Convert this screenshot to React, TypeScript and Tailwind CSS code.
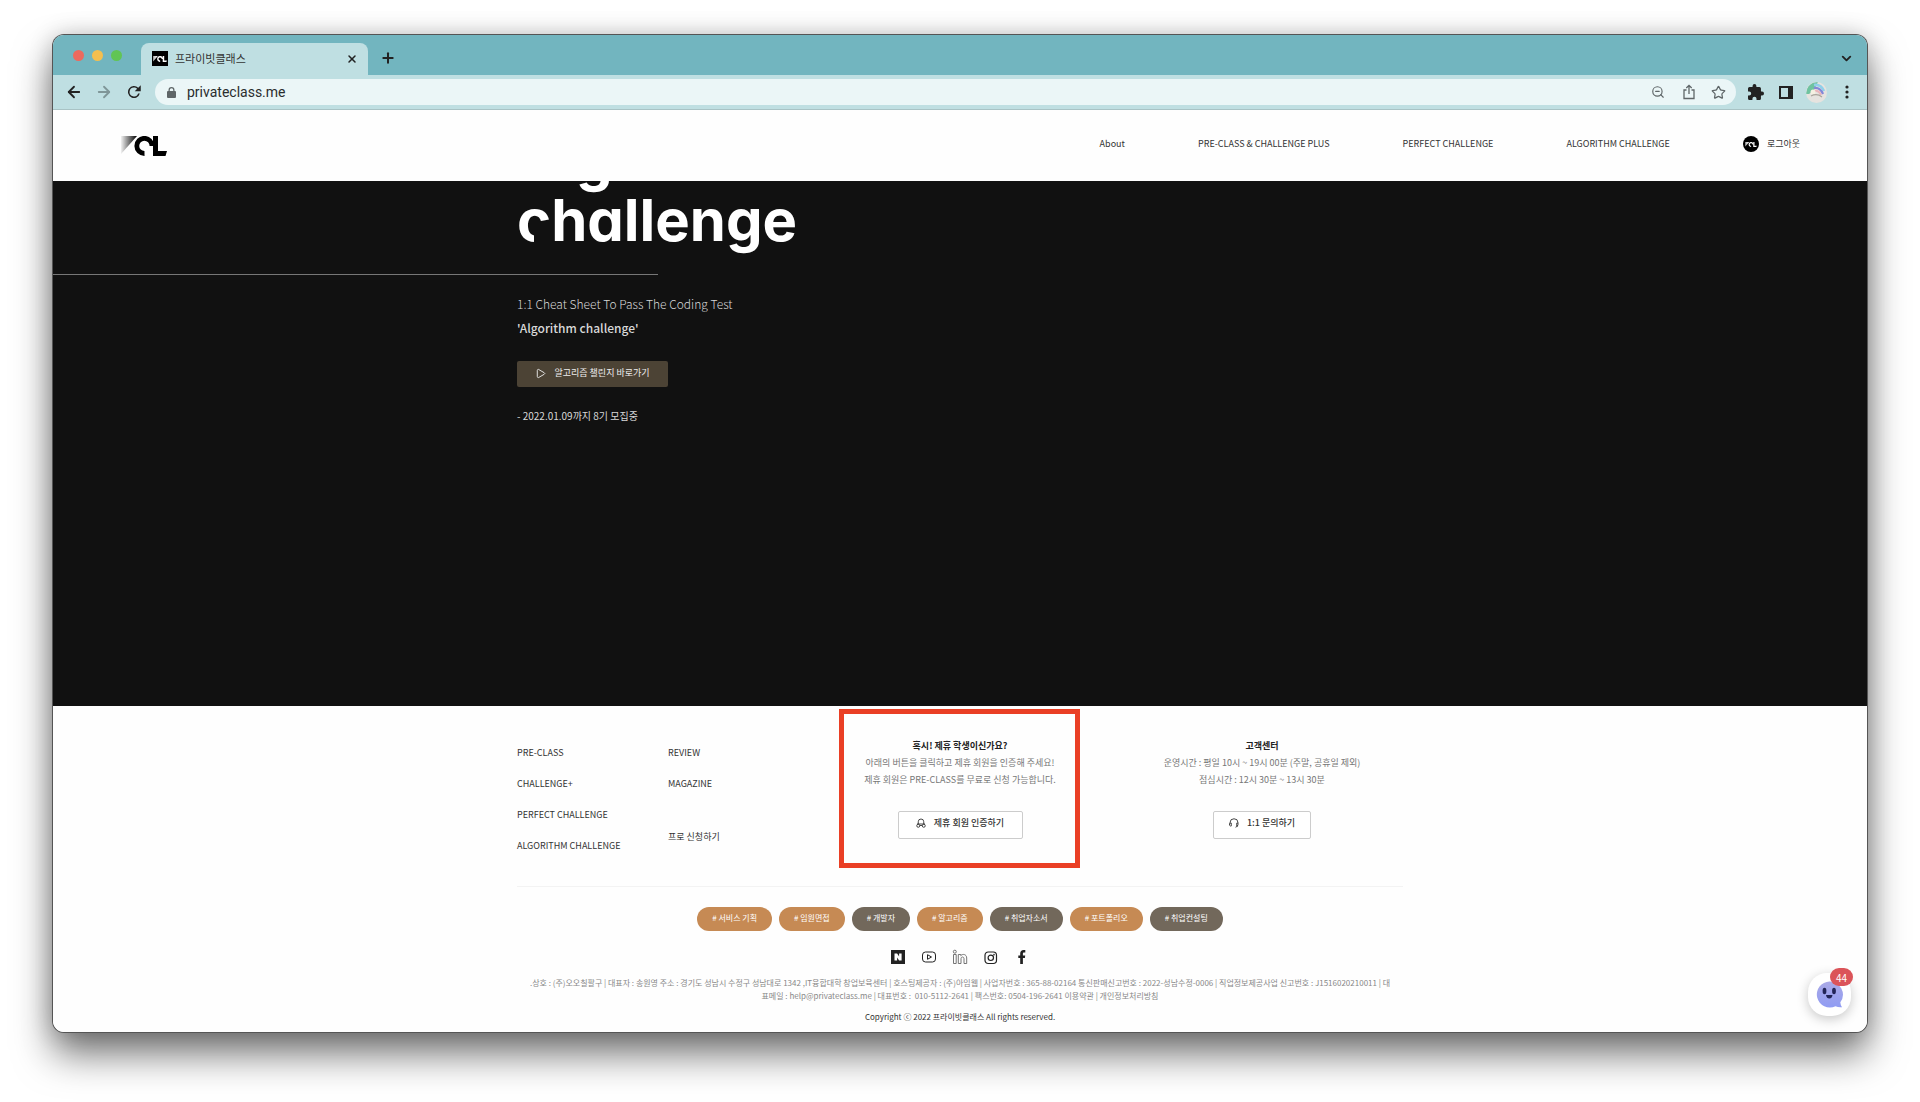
import type { ReactNode } from "react";
import { ArrowLeft, ArrowRight, ChevronDown, Play, Plus, Star, X, ZoomOut } from "lucide-react";

function BrandMark({ className, mono }: { className: string; mono?: string }) {
  const ink = mono ?? "#000";
  const id = mono ? "brand-light" : "brand-dark";
  return (
    <svg className={className} viewBox="0 0 46 20" aria-hidden="true">
      <defs>
        <linearGradient id={id} x1="0" x2="1" y1="0" y2="0">
          <stop offset="0" stopColor={ink} stopOpacity={mono ? "0.7" : "0.05"} />
          <stop offset="1" stopColor={ink} />
        </linearGradient>
      </defs>
      <path d="M0 0h16L0 18z" fill={`url(#${id})`} />
      <path d="M23.500 17.500A7.600 7.600 0 1 1 31 10" fill="none" stroke={ink} strokeWidth="4.800" />
      <path d="M32 0h5v15h9l-1.500 5H32z" fill={ink} />
    </svg>
  );
}

function TopNav() {
  const links = ["About", "PRE-CLASS & CHALLENGE PLUS", "PERFECT CHALLENGE", "ALGORITHM CHALLENGE"];
  return (
    <header className="flex h-[71px] shrink-0 items-center justify-between bg-[#fefefe] pr-[67px] pl-[67px] text-[9px] text-[#333]">
      <a href="#home" aria-label="PCL">
        <BrandMark className="h-5 w-[48px]" />
      </a>
      <nav className="flex items-center gap-[73px] pb-[3px] whitespace-nowrap">
        {links.map((label) => (
          <a key={label} href="#nav">
            {label}
          </a>
        ))}
        <a href="#logout" className="flex items-center gap-2">
          <span className="flex size-4 items-center justify-center rounded-full bg-black">
            <BrandMark className="h-[5px] w-[12px]" mono="#fff" />
          </span>
          로그아웃
        </a>
      </nav>
    </header>
  );
}

function BrowserChrome() {
  return (
    <div className="shrink-0 text-[#222]">
      <div className="flex h-10 items-end bg-[#72b5bf]">
        <div className="flex gap-2 self-center pl-5">
          <span className="size-[11px] rounded-full bg-[#ec6a5e]" />
          <span className="size-[11px] rounded-full bg-[#f4bf4f]" />
          <span className="size-[11px] rounded-full bg-[#61c554]" />
        </div>
        <div className="ml-[19px] flex h-8 w-[227px] items-center rounded-t-lg bg-[#bfdfe2] pr-[10px] pb-px pl-[11px] text-[11px]">
          <span className="flex h-[15px] w-4 items-center justify-center bg-black">
            <BrandMark className="h-[6px] w-[14px]" mono="#fff" />
          </span>
          <span className="ml-[7px] flex-1 text-[#333]">프라이빗클래스</span>
          <button aria-label="Close tab">
            <X className="size-3" strokeWidth={3} />
          </button>
        </div>
        <button aria-label="New tab" className="mb-[9px] ml-3">
          <Plus className="size-4" strokeWidth={3} />
        </button>
        <button aria-label="Search tabs" className="mr-[13px] mb-[9px] ml-auto">
          <ChevronDown className="size-[15px]" strokeWidth={3} />
        </button>
      </div>
      <div className="flex h-[35px] items-center border-b border-[#a9c3c5] bg-[#bfdfe2] pr-[18px] pl-3">
        <button aria-label="Back">
          <ArrowLeft className="size-[18px]" strokeWidth={2.4} />
        </button>
        <button aria-label="Forward" className="ml-3 text-[#7f9698]">
          <ArrowRight className="size-[18px]" strokeWidth={2.4} />
        </button>
        <button aria-label="Reload" className="ml-3">
          <svg className="size-[18px]" viewBox="0 0 24 24" fill="currentColor">
            <path d="M17.650 6.350A8 8 0 1 0 19.730 14h-2.200A5.900 5.900 0 1 1 12 6.100c1.600 0 3.100.7 4.200 1.700L13 11h8V3z" />
          </svg>
        </button>
        <div className="ml-3 flex h-[26px] flex-1 items-center rounded-full bg-[#ebf6f7] pr-[10px] pl-3 text-[#5f6668]">
          <svg className="h-[11px] w-[9px]" viewBox="0 0 18 22" fill="currentColor">
            <path d="M2 8h1V6a6 6 0 0 1 12 0v2h1a2 2 0 0 1 2 2v10a2 2 0 0 1-2 2H2a2 2 0 0 1-2-2V10a2 2 0 0 1 2-2zm3.500 0h7V6a3.500 3.500 0 0 0-7 0z" />
          </svg>
          <input
            aria-label="Address"
            defaultValue="privateclass.me"
            className="ml-[11px] min-w-0 flex-1 bg-transparent font-[Roboto,sans-serif] text-[14px] text-[#2a2d2e] outline-none"
          />
          <button aria-label="Zoom">
            <ZoomOut className="size-[14px]" />
          </button>
          <button aria-label="Share" className="ml-4">
            <svg className="size-4" viewBox="0 0 16 16" fill="none" stroke="currentColor" strokeWidth="1.300">
              <path d="M5.500 6H3v8.500h10V6h-2.500M8 10V1.500M5.300 4 8 1.300 10.700 4" />
            </svg>
          </button>
          <button aria-label="Bookmark" className="ml-[14px]">
            <Star className="size-[15px]" strokeWidth={2} />
          </button>
        </div>
        <button aria-label="Extensions" className="ml-3">
          <svg className="size-4" viewBox="2 1 21 21" fill="currentColor">
            <path d="M20.500 11H19V7a2 2 0 0 0-2-2h-4V3.500a2.500 2.500 0 0 0-5 0V5H4a2 2 0 0 0-2 2v3.800h1.500a2.700 2.700 0 0 1 0 5.400H2V20a2 2 0 0 0 2 2h3.800v-1.500a2.700 2.700 0 0 1 5.400 0V22H17a2 2 0 0 0 2-2v-4h1.500a2.500 2.500 0 0 0 0-5z" />
          </svg>
        </button>
        <button aria-label="Side panel" className="ml-[15px]">
          <svg className="h-[13px] w-[14px]" viewBox="0 0 14 13" fill="currentColor">
            <path fillRule="evenodd" d="M0 0h14v13H0zM2 2v9h7V2z" />
          </svg>
        </button>
        <button aria-label="Profile" className="ml-[13px]">
          <svg className="size-[21px] rounded-full" viewBox="0 0 21 21">
            <rect width="21" height="21" fill="#e6e3df" />
            <path d="M0 12C1 3 6 0 12 0L8 8l-5 4z" fill="#6fc3a0" />
            <path d="M8 3q7-1 10 6" fill="none" stroke="#8fd0ea" strokeWidth="2.500" />
            <path d="M8 6q6-1 9 6" fill="none" stroke="#8487d8" strokeWidth="2.200" />
            <path d="M8 9q5-1 7 4" fill="none" stroke="#eab4bb" strokeWidth="2" />
            <circle cx="7" cy="10" r="2.500" fill="#f5f0e2" />
            <path d="M5 14q6-3 11 1" fill="none" stroke="#aaa59c" strokeWidth="1.200" />
          </svg>
        </button>
        <button aria-label="Menu" className="ml-[18px]">
          <svg className="h-[14px] w-1" viewBox="0 0 4 14" fill="currentColor">
            <circle cx="2" cy="2" r="1.600" />
            <circle cx="2" cy="7" r="1.600" />
            <circle cx="2" cy="12" r="1.600" />
          </svg>
        </button>
      </div>
    </div>
  );
}

function Hero() {
  return (
    <section className="flex-1 overflow-hidden bg-[#111] text-[#d8d8d8]">
      <div className="mx-auto w-[886px] max-w-full">
        <h1 className="relative -mt-[52px] font-[Inter,sans-serif] text-[58px] leading-[61px] font-bold text-white [font-feature-settings:'cv11']">
          Algorithm
          <br />
          challenge
          <span className="absolute bottom-[7px] left-[17px] h-[19px] w-[18px] bg-[#111]" />
        </h1>
      </div>
      <div className="mt-[23px] h-px w-1/3 bg-[#777]" />
      <div className="mx-auto flex w-[886px] max-w-full flex-col items-start pt-[17px]">
        <p className="text-[12px] leading-6 font-light">1:1 Cheat Sheet To Pass The Coding Test</p>
        <p className="text-[12px] leading-6 font-medium">'Algorithm challenge'</p>
        <a
          href="#algorithm"
          className="mt-[21px] flex h-[26px] w-[151px] items-center justify-center gap-2 rounded-xs bg-[#4c4335] pb-[2px] text-[9px] text-[#eee]"
        >
          <Play className="size-[11px]" strokeWidth={2} />
          알고리즘 챌린지 바로가기
        </a>
        <p className="mt-[21px] text-[10px] leading-4">- 2022.01.09까지 8기 모집중</p>
      </div>
    </section>
  );
}

function HelpColumn({ title, lines, children }: { title: string; lines: string[]; children: ReactNode }) {
  return (
    <div className="relative flex flex-col items-center leading-[17px] whitespace-nowrap text-[#777]">
      <h2 className="font-bold text-[#222]">{title}</h2>
      {lines.map((line) => (
        <p key={line}>{line}</p>
      ))}
      {children}
    </div>
  );
}

const tags = [
  { label: "# 서비스 기획", warm: true },
  { label: "# 임원면접", warm: true },
  { label: "# 개발자", warm: false },
  { label: "# 알고리즘", warm: true },
  { label: "# 취업자소서", warm: false },
  { label: "# 포트폴리오", warm: true },
  { label: "# 취업컨설팅", warm: false },
];

function SocialLinks() {
  return (
    <div className="mt-[18px] flex justify-center gap-[15px] text-[#222]">
      <a href="#naver" aria-label="Naver">
        <svg className="size-4" viewBox="0 0 16 16">
          <path d="M1 1h14v14H1z" fill="#222" />
          <path d="M4.500 4.500h2.600l2 3v-3h2.500v7H9.100l-2-3v3H4.500z" fill="#fff" />
        </svg>
      </a>
      <a href="#youtube" aria-label="YouTube">
        <svg className="size-4" viewBox="0 0 16 16" fill="none" stroke="currentColor">
          <rect x="1.500" y="3" width="13" height="10" rx="3" />
          <path d="M6.500 5.700v4.600l4-2.300z" />
        </svg>
      </a>
      <a href="#linkedin" aria-label="LinkedIn">
        <svg className="size-4" viewBox="0 0 16 16" fill="none" stroke="#666" strokeWidth="0.900">
          <circle cx="2.800" cy="2.700" r="1.500" />
          <path d="M1.500 5.500h2.700v9H1.500zM6.300 5.500h2.500v1.200c1.800-2.300 5.900-1.400 5.900 2.300v5.500H12V9.700c0-2.300-3-2.300-3 0v4.800H6.300z" />
        </svg>
      </a>
      <a href="#instagram" aria-label="Instagram">
        <svg className="size-4" viewBox="0 0 16 16" fill="none" stroke="currentColor" strokeWidth="1.200">
          <rect x="2" y="3" width="11.500" height="11.500" rx="3.200" />
          <circle cx="7.800" cy="8.800" r="2.700" />
          <circle cx="11" cy="5.600" r="0.300" />
        </svg>
      </a>
      <a href="#facebook" aria-label="Facebook">
        <svg className="size-4" viewBox="0 0 16 16" fill="currentColor">
          <path d="M6.200 15V9H4.300V6.400h1.900V4.500C6.200 2.300 7.500 1 9.600 1h1.700v2.400h-1.200c-.9 0-1.200.5-1.200 1.300v1.700h2.300L10.900 9h-2v6z" />
        </svg>
      </a>
    </div>
  );
}

function Footer() {
  const outlined =
    "mt-[23px] flex h-7 items-center justify-center gap-2 rounded-xs border border-[#ccc] bg-white pb-[5px] text-[9px] font-medium text-[#333]";
  return (
    <footer className="relative shrink-0 bg-[#fefefe] text-[#333]">
      <div className="mx-auto w-[886px] max-w-full pb-[9px]">
        <div className="-mr-[10px] grid grid-cols-[151px_141px_302px_302px] pt-[31px] pb-[33px] text-[9px] leading-[15px]">
          <ul className="flex flex-col gap-4 pt-2">
            {["PRE-CLASS", "CHALLENGE+", "PERFECT CHALLENGE", "ALGORITHM CHALLENGE"].map((label) => (
              <li key={label}>
                <a href="#class">{label}</a>
              </li>
            ))}
          </ul>
          <ul className="flex flex-col gap-4 pt-2">
            <li>
              <a href="#review">REVIEW</a>
            </li>
            <li>
              <a href="#magazine">MAGAZINE</a>
            </li>
            <li className="pt-[22px]">
              <a href="#pro">프로 신청하기</a>
            </li>
          </ul>
          <HelpColumn
            title="혹시! 제휴 학생이신가요?"
            lines={["아래의 버튼을 클릭하고 제휴 회원을 인증해 주세요!", "제휴 회원은 PRE-CLASS를 무료로 신청 가능합니다."]}
          >
            <button className={`${outlined} w-[125px]`}>
              <svg className="size-[10px]" viewBox="0 0 20 20" fill="none" stroke="currentColor" strokeWidth="1.800">
                <path d="M4.500 12V7.500a5.500 5.500 0 0 1 11 0V12M2 12h16" />
                <circle cx="4.500" cy="15.500" r="3" />
                <circle cx="15.500" cy="15.500" r="3" />
                <path d="M7.500 15h5" />
              </svg>
              제휴 회원 인증하기
            </button>
            <span className="pointer-events-none absolute -top-[28px] left-[30px] h-[159px] w-[241px] border-5 border-[#ea3f25]" />
          </HelpColumn>
          <HelpColumn title="고객센터" lines={["운영시간 : 평일 10시 ~ 19시 00분 (주말, 공휴일 제외)", "점심시간 : 12시 30분 ~ 13시 30분"]}>
            <button className={`${outlined} w-[98px]`}>
              <svg className="size-[10px]" viewBox="0 0 20 20" fill="none" stroke="currentColor" strokeWidth="1.800">
                <path d="M2 11V9.500a8 8 0 0 1 16 0V13q0 4-5 5.500M2 10h2.500v6H2.800L1 14.500v-3zM18 10h-2.500v6H18" />
              </svg>
              1:1 문의하기
            </button>
          </HelpColumn>
        </div>
        <hr className="border-[#f3f3f3]" />
        <ul className="mt-5 flex justify-center gap-[7px] text-[8px] text-white">
          {tags.map((tag) => (
            <li key={tag.label}>
              <a
                href="#tag"
                className={
                  tag.warm
                    ? "flex h-6 items-center rounded-full bg-[#c68a54] px-[15px] pb-[3px]"
                    : "flex h-6 items-center rounded-full bg-[#72685b] px-[15px] pb-[3px]"
                }
              >
                {tag.label}
              </a>
            </li>
          ))}
        </ul>
        <SocialLinks />
        <p className="mt-[11px] text-center text-[8px] leading-[13px] whitespace-nowrap text-[#888]">
          .상호 : (주)오오칠팔구 | 대표자 : 송원영 주소 : 경기도 성남시 수정구 성남대로 1342 ,IT융합대학 창업보육센터 | 호스팅제공자 : (주)아임웹 | 사업자번호 : 365-88-02164 통신판매신고번호 : 2022-성남수정-0006 | 직업정보제공사업 신고번호 : J1516020210011 | 대
          <br />
          표메일 : help@privateclass.me | 대표번호 :&nbsp; 010-5112-2641 | 팩스번호: 0504-196-2641 이용약관 | 개인정보처리방침
        </p>
        <p className="mt-2 text-center text-[8px] leading-[13px] text-[#333]">Copyright ⓒ 2022 프라이빗클래스 All rights reserved.</p>
      </div>
      <button
        aria-label="Chat"
        className="absolute right-4 bottom-4 flex size-[43px] items-center justify-center rounded-[19px] bg-white shadow-[0_3px_12px_rgba(0,0,0,0.22)]"
      >
        <svg className="size-[27px]" viewBox="0 0 27 27">
          <defs>
            <linearGradient id="bubble" x1="0" x2="0" y1="0" y2="1">
              <stop offset="0" stopColor="#aaa9e6" />
              <stop offset="1" stopColor="#909cf3" />
            </linearGradient>
          </defs>
          <path d="M13.500 0.500a13 13 0 1 0 6 24.700q3 1.500 6.500 1-1.500-2-1.700-5A13 13 0 0 0 13.500.5z" fill="url(#bubble)" />
          <ellipse cx="8.500" cy="10" rx="1.900" ry="3.300" fill="#222457" />
          <ellipse cx="18" cy="10" rx="1.900" ry="3.300" fill="#222457" />
          <path d="M10 14h6.500q-.5 3.500-3.200 3.500T10 14z" fill="#222457" />
        </svg>
        <span className="absolute -top-[5px] -right-[2px] flex h-[18px] w-[23px] items-center justify-center rounded-full bg-[#db5459] text-[10px] text-white">
          44
        </span>
      </button>
    </footer>
  );
}

export default function App() {
  return (
    <div className="flex min-h-screen flex-col bg-white px-[53px] pt-[35px] pb-[70px] font-['Noto_Sans_CJK_KR',sans-serif]">
      <div className="flex flex-1 flex-col rounded-[11px] shadow-[0_0_0_1px_#555,0_22px_38px_rgba(0,0,0,0.55),0_0_24px_rgba(0,0,0,0.2)]">
        <div className="flex flex-1 flex-col overflow-hidden rounded-[11px]">
          <BrowserChrome />
          <TopNav />
          <Hero />
          <Footer />
        </div>
      </div>
    </div>
  );
}
